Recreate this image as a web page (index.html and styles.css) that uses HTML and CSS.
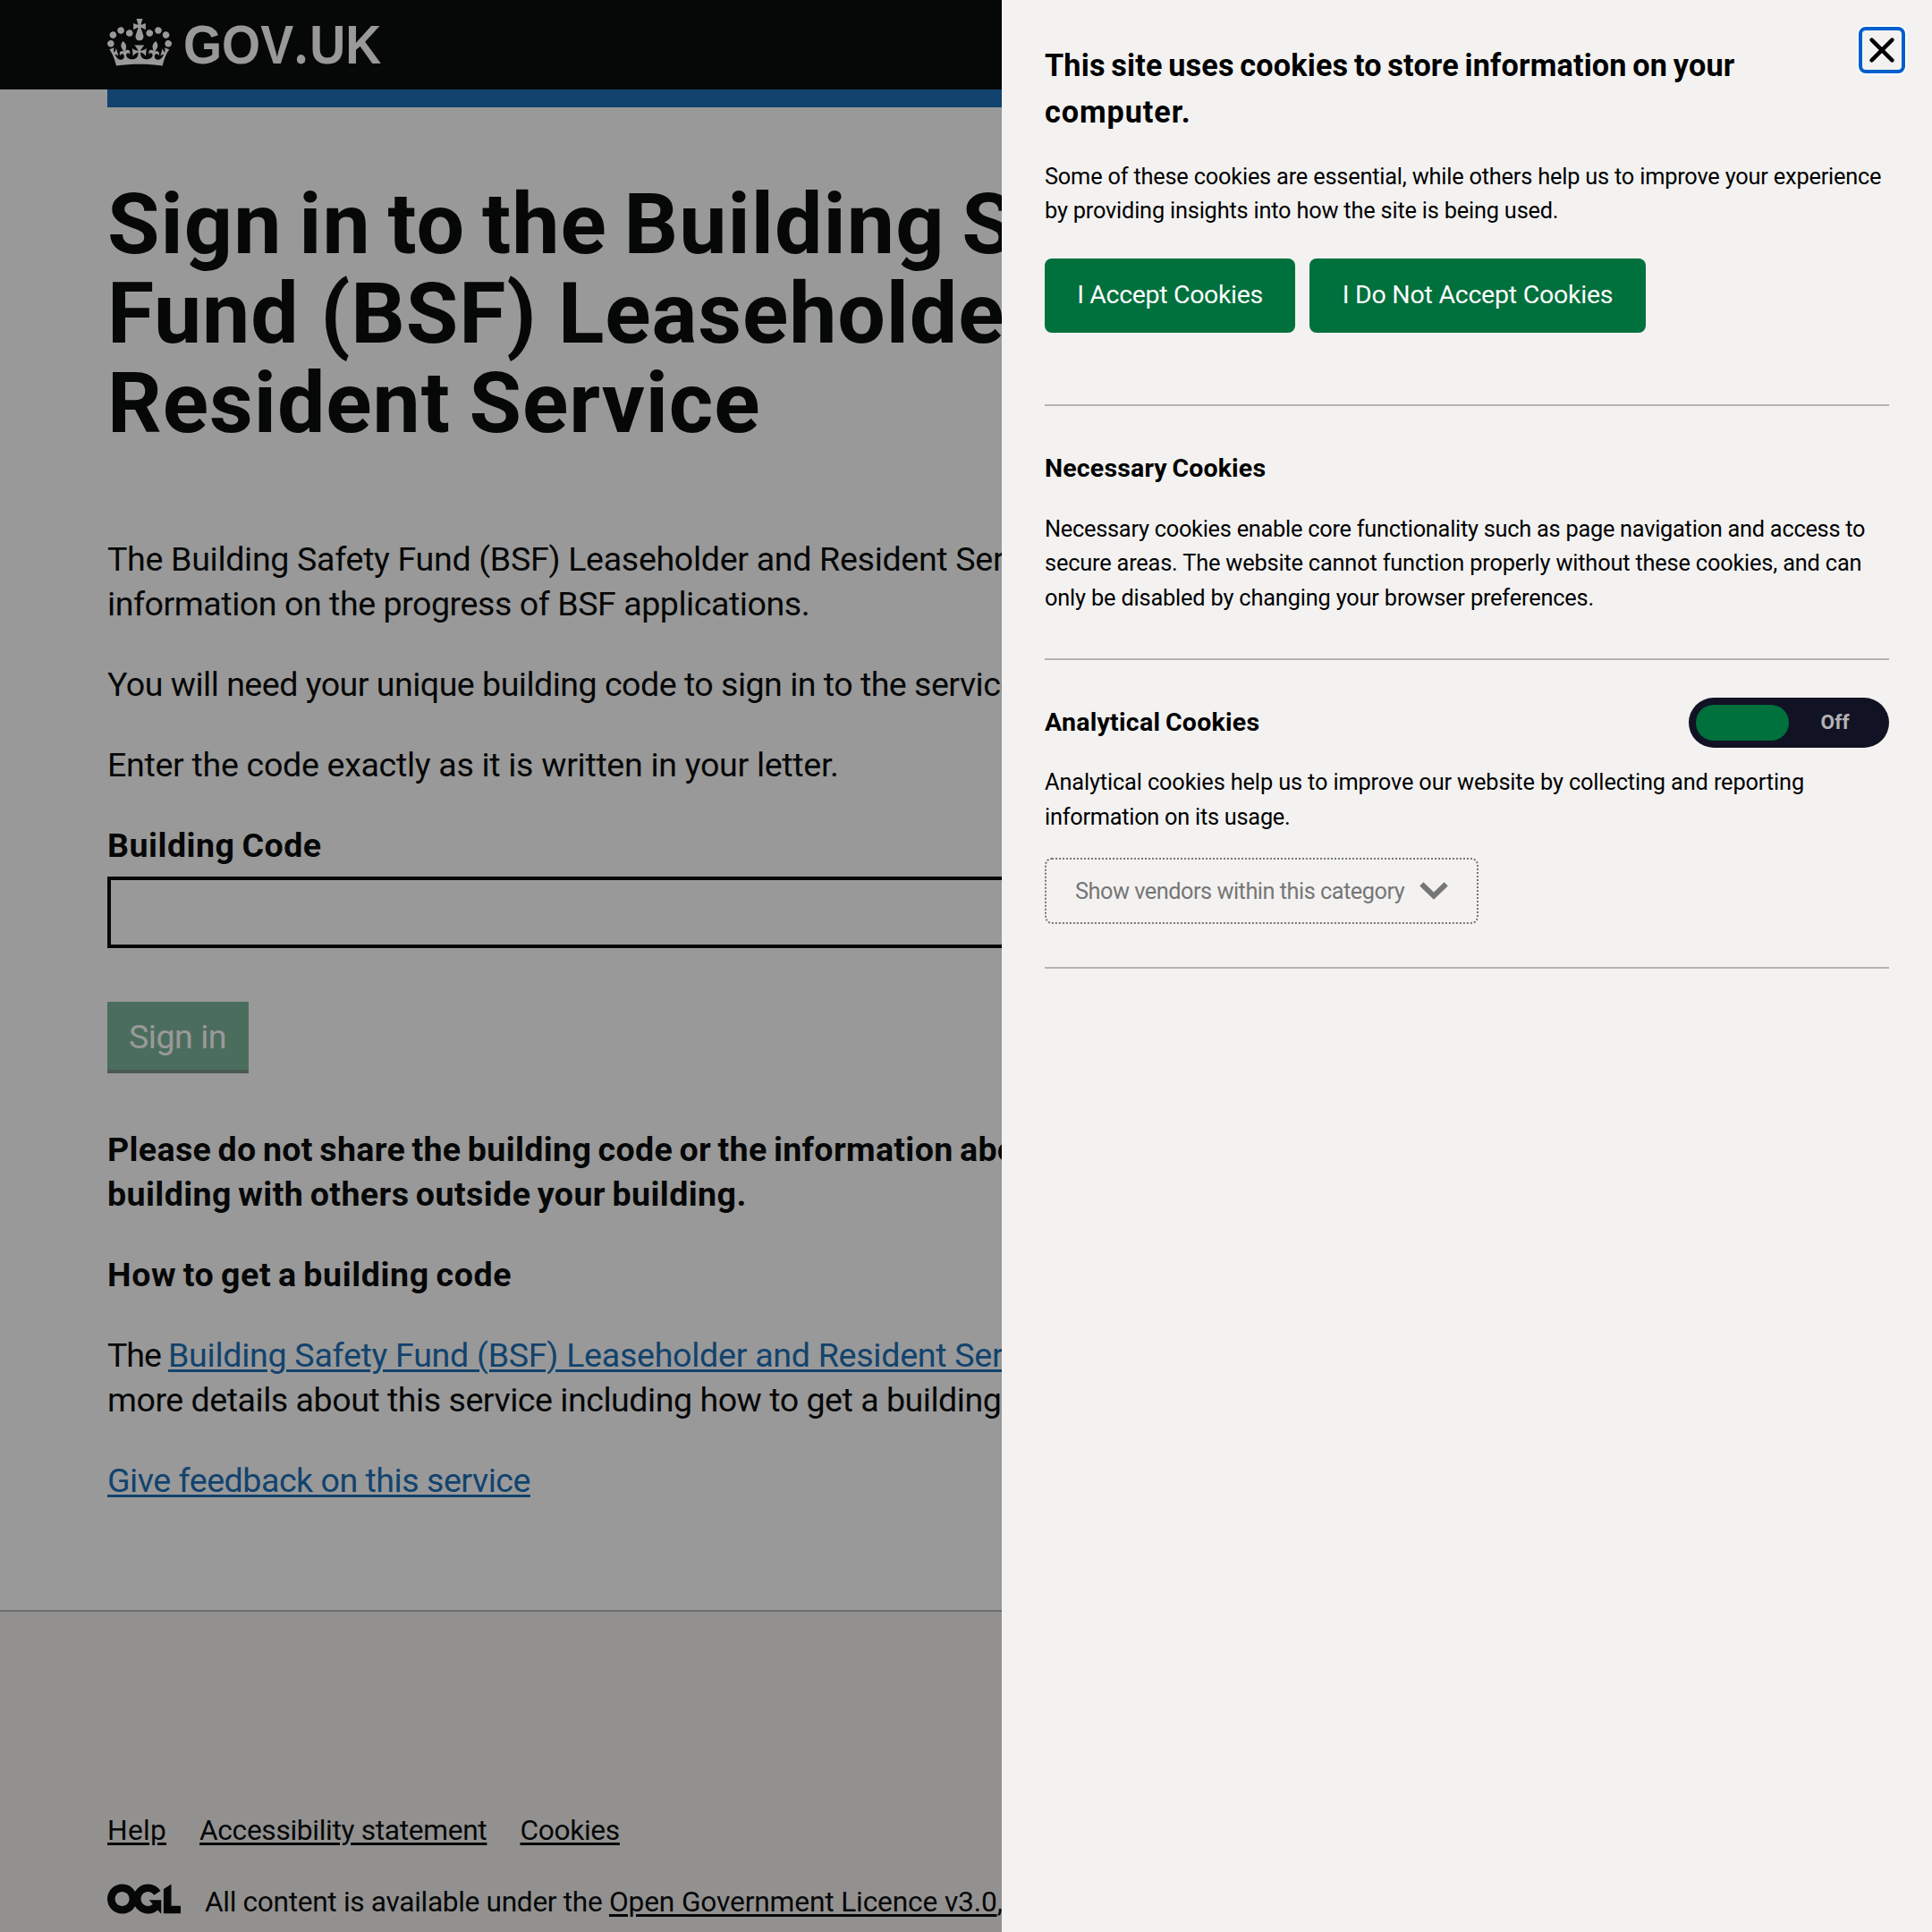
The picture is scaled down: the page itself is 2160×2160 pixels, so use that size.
FILE: index.html
```
<!DOCTYPE html>
<html lang="en">
<head>
  <meta charset="utf-8">
  <title>Sign in to the Building Safety Fund (BSF) Leaseholder and Resident Service - GOV.UK</title>
  <link rel="stylesheet" href="styles.css">
</head>
<body>
  <div class="page">
    <header class="header">
      <a class="logo" aria-label="GOV.UK">
        <svg class="logo__crown" viewBox="0 0 132 97" width="72" height="53" aria-hidden="true">
          <path fill="currentColor" fill-rule="evenodd" d="M25 30.2c3.5 1.5 7.7-.2 9.1-3.7 1.5-3.6-.2-7.8-3.9-9.2-3.6-1.4-7.6.3-9.1 3.9-1.4 3.5.3 7.5 3.9 9zM9 39.5c3.6 1.5 7.8-.2 9.2-3.7 1.5-3.6-.2-7.8-3.9-9.1-3.6-1.5-7.6.2-9.1 3.8-1.4 3.5.3 7.5 3.8 9zM4.4 57.2c3.5 1.5 7.7-.2 9.1-3.8 1.5-3.6-.2-7.7-3.9-9.1-3.5-1.5-7.6.3-9.1 3.8-1.4 3.5.3 7.6 3.9 9.1zm38.3-21.4c3.5 1.5 7.7-.2 9.1-3.8 1.5-3.6-.2-7.7-3.9-9.1-3.6-1.5-7.6.3-9.1 3.8-1.3 3.6.4 7.7 3.9 9.1zm64.4-5.6c-3.6 1.5-7.8-.2-9.1-3.7-1.5-3.6.2-7.8 3.8-9.2 3.6-1.4 7.7.3 9.2 3.9 1.3 3.5-.4 7.5-3.9 9zm15.9 9.3c-3.6 1.5-7.7-.2-9.1-3.7-1.5-3.6.2-7.8 3.7-9.1 3.6-1.5 7.7.2 9.2 3.8 1.5 3.5-.3 7.5-3.8 9zm4.7 17.7c-3.6 1.5-7.8-.2-9.2-3.8-1.5-3.6.2-7.7 3.9-9.1 3.6-1.5 7.7.3 9.2 3.8 1.3 3.5-.4 7.6-3.9 9.1zM89.3 35.8c-3.6 1.5-7.8-.2-9.2-3.8-1.4-3.6.2-7.7 3.9-9.1 3.6-1.5 7.7.3 9.2 3.8 1.4 3.6-.3 7.7-3.9 9.1zM69.7 17.7l8.9 4.7V9.3l-8.9 2.8c-.2-.3-.5-.6-.9-.9L72.4 0H59.6l3.5 11.2c-.3.3-.6.5-.9.9l-8.8-2.8v13.1l8.8-4.7c.3.3.6.7.9.9l-5 15.4v.1c-.2.8-.4 1.6-.4 2.4 0 4.1 3.1 7.5 7 8.1h.2c.3 0 .7.1 1 .1.4 0 .7 0 1-.1h.2c4-.6 7.1-4.1 7.1-8.1 0-.8-.1-1.7-.4-2.4V34l-5.1-15.4c.4-.2.7-.6 1-.9zM66 92.8c16.9 0 32.8 1.1 47.1 3.2 4-16.9 8.9-26.7 14-33.5l-9.6-3.4c1 4.9 1.1 7.2 0 10.2-1.5-1.4-3-4.3-4.2-8.7L108.6 76c2.8-2 5-3.2 7.5-3.3-4.4 9.4-10 11.9-13.6 11.2-4.3-.8-6.3-4.6-5.6-7.9 1-4.7 5.7-5.9 8-.5 4.3-8.7-3-11.4-7.6-8.8 7.1-7.2 7.9-13.5 2.1-21.1-8 6.1-8.1 12.3-4.5 20.8-4.7-5.4-12.1-2.5-9.5 6.2 3.4-5.2 7.9-2 7.2 3.1-.6 4.3-6.4 7.8-13.5 7.2-10.3-.9-10.9-8-11.2-13.8 2.5-.5 7.1 1.8 11 7.3L80.2 60c-4.1 4.4-8 5.3-12.3 5.4 1.4-4.4 8-11.6 8-11.6H55.5s6.4 7.2 7.9 11.6c-4.2-.1-8-1-12.3-5.4l1.4 16.4c3.9-5.5 8.5-7.7 10.9-7.3-.3 5.8-.9 12.8-11.1 13.8-7.2.6-12.9-2.9-13.5-7.2-.7-5 3.8-8.3 7.1-3.1 2.7-8.7-4.6-11.6-9.4-6.2 3.7-8.5 3.6-14.7-4.6-20.8-5.8 7.6-5 13.9 2.2 21.1-4.7-2.6-11.9.1-7.7 8.8 2.3-5.5 7.1-4.2 8.1.5.7 3.3-1.3 7.1-5.7 7.9-3.5.7-9-1.8-13.5-11.2 2.5.1 4.7 1.3 7.5 3.3l-4.7-15.4c-1.2 4.4-2.7 7.2-4.3 8.7-1.1-3-.9-5.3 0-10.2l-9.5 3.4c5 6.9 9.9 16.7 14 33.5 14.8-2.1 30.8-3.2 47.7-3.2z"/>
        </svg>
        <span class="logo__text">GOV<span class="logo__dot">.</span>UK</span>
      </a>
    </header>
    <div class="brand-bar"></div>

    <main class="main">
      <h1 class="title">
        <span class="line line--title-1">Sign in to the Building Safety</span>
        <span class="line line--title-2">Fund (BSF) Leaseholder and</span>
        <span class="line line--title-3">Resident Service</span>
      </h1>
      <p class="body">
        <span class="line line--intro-1">The Building Safety Fund (BSF) Leaseholder and Resident Service provides</span>
        <span class="line line--intro-2">information on the progress of BSF applications.</span>
      </p>
      <p class="body"><span class="line line--need">You will need your unique building code to sign in to the service.</span></p>
      <p class="body"><span class="line line--enter">Enter the code exactly as it is written in your letter.</span></p>
      <form class="form">
        <label class="label" for="code">Building Code</label>
        <input class="input" id="code" type="text">
        <button class="submit" type="button" disabled>Sign in</button>
      </form>
      <p class="body body--bold">
        <span class="line line--share-1">Please do not share the building code or the information about your</span>
        <span class="line line--share-2">building with others outside your building.</span>
      </p>
      <p class="body body--bold"><span class="line line--how">How to get a building code</span></p>
      <p class="body">
        <span class="line"><span class="lead">The </span><a class="link line--link">Building Safety Fund (BSF) Leaseholder and Resident Service</a></span>
        <span class="line line--more">more details about this service including how to get a building code.</span>
      </p>
      <p class="body"><a class="link line--more">Give feedback on this service</a></p>
    </main>

    <footer class="footer">
      <nav class="footer__links">
        <a class="footer__link footer__link--help">Help</a>
        <a class="footer__link">Accessibility statement</a>
        <a class="footer__link">Cookies</a>
      </nav>
      <div class="licence">
        <svg class="licence__logo" viewBox="0 0 483.2 195.7" width="82" height="34" aria-hidden="true">
          <path fill="currentColor" d="M421.5 142.8V.1l-50.7 32.3v161.1h112.4v-50.7zm-122.3-9.6A47.12 47.12 0 0 1 221 97.8c0-26 21.1-47.1 47.1-47.1 16.7 0 31.4 8.7 39.7 21.8l42.7-27.2A97.63 97.63 0 0 0 268.1 0c-36.5 0-68.3 20.1-85.1 49.7A98 98 0 0 0 97.8 0C43.9 0 0 43.9 0 97.8s43.9 97.8 97.8 97.8c36.5 0 68.3-20.1 85.1-49.7a97.76 97.76 0 0 0 149.6 25.4l19.4 22.2h3v-87.8h-80l24.3 27.5zM97.8 145c-26 0-47.1-21.1-47.1-47.1s21.1-47.1 47.1-47.1 47.1 21.1 47.1 47.1S123.8 145 97.8 145"/>
        </svg>
        <span class="licence__text">All content is available under the <a class="footer__link footer__link--ogl">Open Government Licence v3.0</a>, except</span>
      </div>
    </footer>
  </div>

  <div class="overlay"></div>

  <aside class="panel" role="dialog" aria-label="Cookie preferences">
    <button class="close" type="button" aria-label="Close">
      <svg viewBox="0 0 28 28" width="28" height="28" aria-hidden="true">
        <path d="M2.6 2.6 25.4 25.4M25.4 2.6 2.6 25.4" fill="none" stroke="#000" stroke-width="4.4" stroke-linecap="round"/>
      </svg>
    </button>
    <h2 class="panel__title">
      <span class="line line--panel-title">This site uses cookies to store information on your</span>
      <span class="line line--computer">computer.</span>
    </h2>
    <p class="panel__text panel__text--intro">
      <span class="line">Some of these cookies are essential, while others help us to improve your experience</span>
      <span class="line">by providing insights into how the site is being used.</span>
    </p>
    <div class="actions">
      <button class="action action--accept" type="button">I Accept Cookies</button>
      <button class="action action--reject" type="button">I Do Not Accept Cookies</button>
    </div>
    <section class="category category--necessary">
      <h3 class="category__title">Necessary Cookies</h3>
      <p class="panel__text panel__text--necessary">
        <span class="line line--necessary-1">Necessary cookies enable core functionality such as page navigation and access to</span>
        <span class="line line--necessary-2">secure areas. The website cannot function properly without these cookies, and can</span>
        <span class="line line--necessary-2">only be disabled by changing your browser preferences.</span>
      </p>
    </section>
    <section class="category category--analytical">
      <div class="category__head">
        <h3 class="category__title category__title--analytical">Analytical Cookies</h3>
        <div class="toggle" role="switch" aria-checked="false">
          <span class="toggle__knob"></span>
          <span class="toggle__label">Off</span>
        </div>
      </div>
      <p class="panel__text panel__text--analytical">
        <span class="line line--analytical-1">Analytical cookies help us to improve our website by collecting and reporting</span>
        <span class="line line--analytical-2">information on its usage.</span>
      </p>
      <button class="vendors" type="button">
        <span>Show vendors within this category</span>
        <svg viewBox="0 0 32 20" width="32" height="20" aria-hidden="true">
          <path d="M2.3 2.3 16 15.6 29.7 2.3" fill="none" stroke="currentColor" stroke-width="6"/>
        </svg>
      </button>
    </section>
  </aside>
</body>
</html>
```
FILE: styles.css
```
* {
  box-sizing: border-box;
}

html,
body {
  margin: 0;
  height: 2160px;
  overflow: hidden;
}

body {
  font-family: Roboto, "Liberation Sans", sans-serif;
  color: #0b0c0c;
  background: #fff;
}

h1, h2, h3, p {
  margin: 0;
}

.page {
  display: flex;
  flex-direction: column;
  height: 2160px;
}

.line {
  display: block;
  white-space: nowrap;
}

/* Header */
.header {
  display: flex;
  align-items: center;
  height: 100px;
  padding: 0 120px;
  background: #0b0c0c;
}

.logo {
  display: flex;
  align-items: center;
  color: #fff;
}

.logo__crown {
  margin-bottom: 5px;
}

.logo__text {
  margin-left: 13.2px;
  font: 700 61px/100px "Liberation Sans", Arial, sans-serif;
  transform: scaleX(0.908);
  transform-origin: left center;
}

.logo__dot {
  margin: 0 2.4px 0 1.3px;
  font: 700 68px/1px Lato, sans-serif;
}

.brand-bar {
  height: 20px;
  margin: 0 120px;
  background: #1d70b8;
}

/* Main column */
.main {
  display: flex;
  flex-direction: column;
  width: 1280px;
  height: 1680px;
  padding: 81px 0 0 120px;
}

.title {
  margin-bottom: 99px;
  font-size: 95px;
  font-weight: 700;
  line-height: 100px;
}

.line--title-1 { letter-spacing: 1.09px; word-spacing: -6px; }
.line--title-2 { letter-spacing: 0.9px; word-spacing: -1px; }
.line--title-3 { letter-spacing: 0.95px; word-spacing: -4px; }

.body {
  margin-bottom: 40px;
  font-size: 37.6px;
  line-height: 50px;
}

.body--bold {
  font-weight: 700;
  word-spacing: -2.3px;
}

.line--intro-1 { letter-spacing: -0.32px; }
.line--intro-2 { letter-spacing: -0.46px; }
.line--need { letter-spacing: -0.52px; }
.line--enter { letter-spacing: -0.31px; }
.line--share-1 { letter-spacing: 0.33px; }
.line--share-2 { letter-spacing: 0.4px; }
.line--how { letter-spacing: 0.6px; }
.line--link { letter-spacing: -0.28px; }
.line--more { letter-spacing: -0.48px; }
.lead { letter-spacing: -1.1px; }

.link {
  color: #1d70b8;
  text-decoration: underline;
  text-decoration-thickness: 3px;
  text-underline-offset: 3px;
}

.form {
  display: flex;
  flex-direction: column;
  align-items: flex-start;
  margin-bottom: 60px;
}

.label {
  margin-bottom: 10px;
  font-size: 37.6px;
  font-weight: 700;
  line-height: 50px;
  letter-spacing: 0.5px;
  word-spacing: -2px;
}

.input {
  width: 100%;
  height: 80px;
  margin-bottom: 60px;
  border: 4px solid #0b0c0c;
  border-radius: 0;
  background: #fff;
}

.submit {
  width: 158px;
  height: 80px;
  padding: 1px 0 3px 24px;
  border: 0;
  background: #00703c;
  box-shadow: inset 0 -4px 0 #002d18;
  color: #fff;
  font: 400 37.6px/76px Roboto, sans-serif;
  letter-spacing: -0.49px;
  text-align: left;
  opacity: 0.5;
}

/* Footer */
.footer {
  display: flex;
  flex-direction: column;
  flex: 1;
  padding: 225px 120px 0;
  border-top: 2px solid #b1b4b6;
  background: #f3f2f1;
  font-size: 31.7px;
  line-height: 40px;
}

.footer__links {
  display: flex;
  gap: 37px;
  margin-bottom: 40px;
  letter-spacing: -0.32px;
}

.footer__link {
  text-decoration: underline;
  text-decoration-thickness: 3px;
  text-underline-offset: 3px;
}

.footer__link--help { letter-spacing: 0.27px; }
.footer__link--ogl { letter-spacing: -0.15px; }

.licence {
  display: flex;
  gap: 27px;
  width: 1240px;
}

.licence__logo {
  margin-top: -1px;
}

.licence__text {
  letter-spacing: -0.34px;
  white-space: nowrap;
}

/* Cookie panel */
.overlay {
  position: fixed;
  inset: 0;
  background: rgba(0, 0, 0, 0.4);
}

.panel {
  position: fixed;
  top: 0;
  right: 0;
  bottom: 0;
  width: 1040px;
  padding: 47px 48px 0;
  background: #f3f2f1;
  color: #000;
}

.close {
  position: absolute;
  top: 30px;
  right: 30px;
  display: flex;
  align-items: center;
  justify-content: center;
  width: 52px;
  height: 52px;
  padding: 0;
  border: 4px solid #005fcc;
  border-radius: 8px;
  background: transparent;
  box-shadow: 0 0 0 2px #fff;
}

.panel__title {
  font-size: 34.2px;
  font-weight: 700;
  line-height: 52px;
}

.line--panel-title { letter-spacing: 0.17px; word-spacing: -2px; }
.line--computer { letter-spacing: 0.95px; }

.panel__text {
  font-size: 25.35px;
  line-height: 38.4px;
}

.panel__text--intro {
  margin-top: 27px;
  letter-spacing: -0.2px;
}

.actions {
  display: flex;
  gap: 16px;
  margin: 34.2px 0 80px;
}

.action {
  height: 83px;
  padding: 1px 0 2px;
  border: 0;
  border-radius: 8px;
  background: #00703c;
  color: #fff;
  font: 400 28.5px/80px Roboto, sans-serif;
}

.action--accept {
  width: 280px;
  letter-spacing: -0.33px;
}

.action--reject {
  width: 376px;
  letter-spacing: -0.23px;
}

.category {
  border-top: 2px solid #b3b3b3;
}

.category__title {
  font-size: 28.5px;
  font-weight: 700;
  line-height: 43.2px;
  letter-spacing: 0.17px;
  word-spacing: -1.7px;
}

.category__title--analytical {
  letter-spacing: 0.26px;
}

.category--necessary {
  height: 284px;
  padding-top: 47.5px;
}

.panel__text--necessary {
  margin-top: 27.3px;
}

.line--necessary-1 { letter-spacing: -0.256px; }
.line--necessary-2 { letter-spacing: -0.18px; }

.category--analytical {
  height: 347px;
  padding-top: 42px;
  border-bottom: 2px solid #b3b3b3;
}

.category__head {
  display: flex;
  align-items: center;
  justify-content: space-between;
  height: 56px;
}

.toggle {
  display: flex;
  align-items: center;
  width: 224px;
  height: 56px;
  padding: 8px;
  border-radius: 28px;
  background: #111224;
}

.toggle__knob {
  width: 104px;
  height: 40px;
  border-radius: 20px;
  background: #00703c;
}

.toggle__label {
  margin-left: 35.5px;
  padding-bottom: 1px;
  color: #b3b3b3;
  font-size: 22.6px;
  font-weight: 700;
  line-height: 40px;
  letter-spacing: 0.2px;
}

.panel__text--analytical {
  margin-top: 19.3px;
}

.line--analytical-1 { letter-spacing: -0.14px; }
.line--analytical-2 { letter-spacing: -0.26px; }

.vendors {
  display: flex;
  align-items: center;
  gap: 17px;
  width: 485px;
  height: 74px;
  margin-top: 26.9px;
  padding: 0 31px 0 32px;
  border: 2px dotted #767676;
  border-radius: 8px;
  background: transparent;
  color: #767676;
  font: 400 25.35px/38px Roboto, sans-serif;
  letter-spacing: -0.51px;
  white-space: nowrap;
}
```
